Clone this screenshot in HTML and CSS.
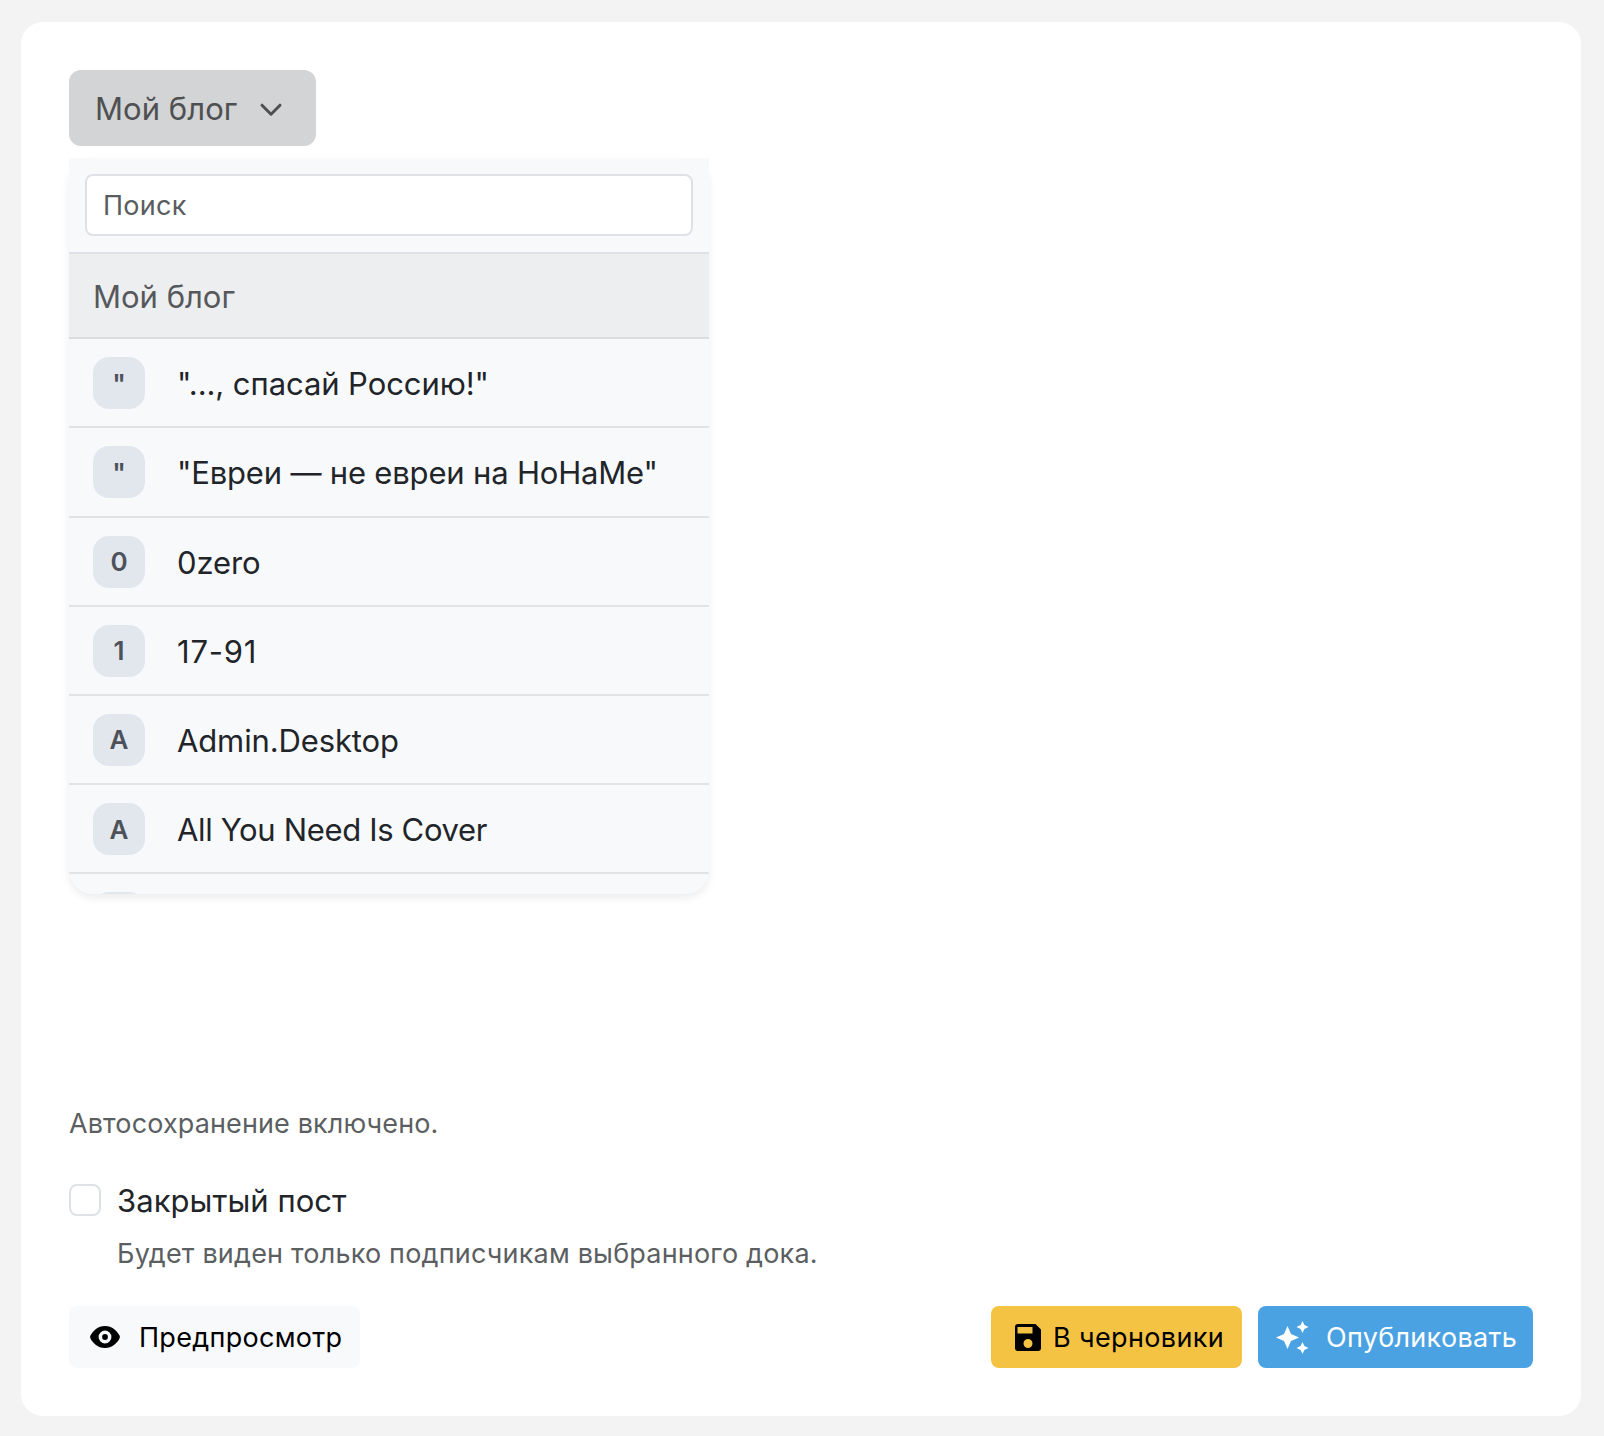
FILE: index.html
```html
<!DOCTYPE html>
<html lang="ru">
<head>
    <meta charset="UTF-8">
    <meta name="viewport" content="width=device-width, initial-scale=1.0">
    <title>Новый пост</title>
    <link rel="stylesheet" href="styles.css">
</head>
<body>
    <div class="card">
        <div class="dropdown">
            <button class="dropdown-toggle" type="button">
                <span>Мой блог</span>
                <svg class="chevron" viewBox="0 0 24 16"><path d="M3 3.200l9 9 9-9"/></svg>
            </button>

            <div class="dropdown-menu">
                <div class="search">
                    <input class="search-input" type="text" placeholder="Поиск">
                </div>
                <ul class="list">
                    <li class="item selected">Мой блог</li>
                    <li class="item"><span class="avatar">"</span><span class="name">"..., спасай Россию!"</span></li>
                    <li class="item"><span class="avatar">"</span><span class="name long">"Евреи — не евреи на НоНаМе"</span></li>
                    <li class="item"><span class="avatar">0</span><span class="name latin">0zero</span></li>
                    <li class="item"><span class="avatar">1</span><span class="name digits">17-91</span></li>
                    <li class="item"><span class="avatar">A</span><span class="name latin">Admin.Desktop</span></li>
                    <li class="item"><span class="avatar">A</span><span class="name latin-long">All You Need Is Cover</span></li>
                    <li class="item"><span class="avatar"></span></li>
                </ul>
            </div>
        </div>

        <div class="footer">
            <p class="autosave">Автосохранение включено.</p>

            <label class="check">
                <input class="check-input" type="checkbox">
                <span class="check-label">Закрытый пост</span>
            </label>
            <p class="hint">Будет виден только подписчикам выбранного дока.</p>

            <div class="actions">
                <button class="btn btn-preview" type="button">
                    <svg class="icon-eye" viewBox="0 0 30 22"><path fill-rule="evenodd" d="M15 0C22.200 0 27 5 29.400 9.300a3.400 3.400 0 0 1 0 3.400C27 17 22.200 22 15 22S3 17 .6 12.700a3.400 3.400 0 0 1 0-3.400C3 5 7.800 0 15 0zm0 4.600a6.400 6.400 0 1 0 0 12.800 6.400 6.400 0 0 0 0-12.800z"/><circle cx="15" cy="11" r="2.900"/></svg>
                    <span>Предпросмотр</span>
                </button>
                <div class="actions-right">
                    <button class="btn btn-draft" type="button">
                        <svg class="icon-save" viewBox="0 0 26 27"><path fill-rule="evenodd" d="M3 0h17.500L26 5.500V24a3 3 0 0 1-3 3H3a3 3 0 0 1-3-3V3a3 3 0 0 1 3-3zm-.5 3v6.500H17.500V3zM13 15a4.500 4.500 0 1 0 0 9 4.500 4.500 0 0 0 0-9z"/></svg>
                        <span>В черновики</span>
                    </button>
                    <button class="btn btn-publish" type="button">
                        <svg class="icon-stars" viewBox="0 0 33 33"><path d="M11.500 5L15 13l8 3.500-8 3.500-3.500 8L8 20l-8-3.500L8 13z"/><path d="M26.500 0l1.900 4.100 4.100 1.900-4.100 1.900-1.900 4.100-1.900-4.100L20.500 6l4.100-1.900z"/><path d="M26.500 21l1.900 4.100 4.100 1.900-4.100 1.900-1.900 4.100-1.900-4.100-4.100-1.900 4.100-1.900z"/></svg>
                        <span>Опубликовать</span>
                    </button>
                </div>
            </div>
        </div>
    </div>
</body>
</html>
```
FILE: styles.css
```css
* {
    box-sizing: border-box;
}
body {
    margin: 0;
    padding: 22px 23px 20px 21px;
    background-color: #f3f3f3;
    color: #212529;
    font-family: Inter, "Noto Sans", sans-serif;
    font-size: 31px;
}
button,
input {
    font-family: inherit;
    margin: 0;
}
p {
    margin: 0;
}
.card {
    display: flex;
    flex-direction: column;
    justify-content: space-between;
    height: 1394px;
    padding: 48px;
    background-color: #fff;
    border-radius: 22px;
}

/* blog picker */
.dropdown {
    position: relative;
}
.dropdown-toggle {
    display: flex;
    align-items: center;
    gap: 22px;
    width: 247px;
    height: 76px;
    padding: 0 26px;
    border: none;
    border-radius: 12px;
    background-color: #d3d4d5;
    color: #4f5051;
    font-size: 31px;
    letter-spacing: 0.05px;
    cursor: pointer;
}
.chevron {
    width: 24px;
    height: 16px;
    margin-top: 4px;
    fill: none;
    stroke: currentColor;
    stroke-width: 3;
    stroke-linecap: round;
    stroke-linejoin: round;
}
.dropdown-menu {
    position: absolute;
    top: 88px;
    left: 0;
    display: flex;
    flex-direction: column;
    width: 640px;
    height: 736px;
    border-radius: 24px;
    background-color: #f8f9fb;
    box-shadow: 0 4px 8px rgba(0, 0, 0, 0.075);
}
.search {
    padding: 16px;
    border-bottom: 2px solid #dfe1e8;
    background-color: #f8f9fb;
}
.search-input {
    display: block;
    width: 100%;
    height: 62px;
    padding: 0 16px;
    border: 2px solid #dee2e6;
    border-radius: 8px;
    background-color: #fff;
    font-size: 27px;
    letter-spacing: 0.3px;
}
.search-input::placeholder {
    color: #5a5d60;
    opacity: 1;
}
.list {
    flex: 1;
    min-height: 0;
    margin: 0;
    padding: 0;
    overflow: hidden;
    border-radius: 0 0 24px 24px;
    list-style: none;
}
.item {
    display: flex;
    align-items: center;
    gap: 32px;
    height: 89.17px;
    padding: 1px 24px 0;
    border-bottom: 2px solid #e1e3e5;
}
.item.selected {
    height: 85.2px;
    padding-top: 2px;
    border-color: #dbdcde;
    background-color: #edeef0;
    color: #56585b;
}
.avatar {
    display: flex;
    align-items: center;
    justify-content: center;
    width: 52px;
    height: 52px;
    border-radius: 16px;
    background-color: #e2e7ee;
    color: #4d525a;
    font-size: 26px;
    font-weight: 600;
}
.name {
    padding-top: 1px;
    letter-spacing: -0.08px;
}
.name.long {
    letter-spacing: -0.18px;
}
.name.latin {
    letter-spacing: -0.13px;
}
.name.latin-long {
    letter-spacing: -0.34px;
}
.name.digits {
    letter-spacing: 0.8px;
}

/* bottom part of the form */
.autosave,
.hint {
    color: #5c5f62;
    font-size: 27px;
    line-height: 40px;
    letter-spacing: 0.12px;
}
.check {
    display: flex;
    align-items: center;
    gap: 16px;
    height: 48px;
    margin-top: 32px;
}
.check-input {
    appearance: none;
    width: 32px;
    height: 32px;
    border: 2px solid #dee2e6;
    border-radius: 8px;
    background-color: #fff;
}
.check-label {
    padding-top: 1px;
    letter-spacing: 0.05px;
}
.hint {
    margin-top: 10px;
    padding-left: 48px;
    letter-spacing: 0.19px;
}
.actions {
    display: flex;
    justify-content: space-between;
    margin-top: 32px;
}
.actions-right {
    display: flex;
    gap: 16px;
}
.btn {
    display: flex;
    align-items: center;
    height: 62px;
    padding: 0;
    border: none;
    border-radius: 8px;
    color: #000;
    font-size: 27px;
    letter-spacing: 0.3px;
    cursor: pointer;
}
.btn svg {
    flex: none;
    fill: currentColor;
}
.btn-preview {
    gap: 19px;
    width: 291px;
    padding-left: 21px;
    background-color: #f8f9fb;
}
.btn-draft {
    gap: 12px;
    width: 251px;
    padding-left: 24px;
    background-color: #f5c343;
    letter-spacing: 0.36px;
}
.btn-publish {
    gap: 17px;
    width: 275px;
    padding-left: 18px;
    background-color: #4aa2e3;
    color: #fff;
}
.icon-eye {
    width: 30px;
    height: 22px;
}
.icon-save {
    width: 26px;
    height: 27px;
}
.icon-stars {
    width: 33px;
    height: 33px;
}
```
